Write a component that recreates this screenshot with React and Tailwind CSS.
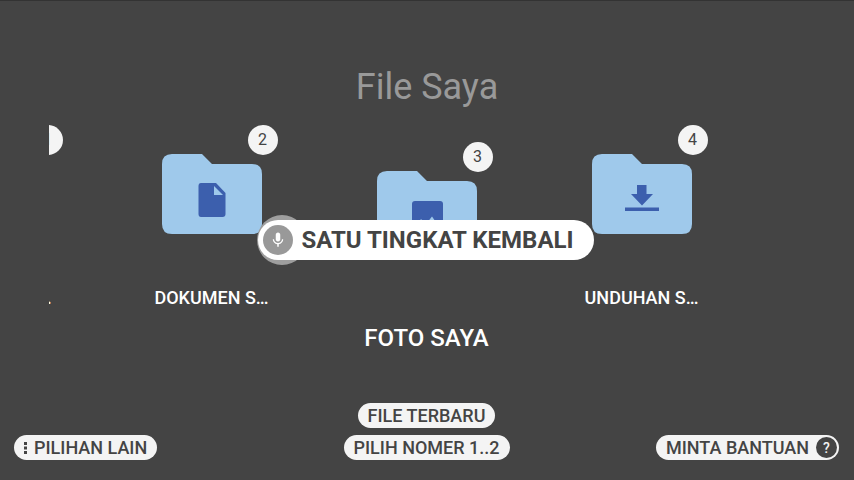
const FOLDER = "M10 0H40L50 10H90Q100 10 100 20V70Q100 80 90 80H10Q0 80 0 70V10Q0 0 10 0Z";

function Folder({ children }) {
  return (
    <svg viewBox="0 0 100 80" className="h-20 w-[100px]" aria-hidden="true">
      <path d={FOLDER} fill="#9fc9eb" />
      <g fill="#3c5fad">{children}</g>
    </svg>
  );
}

const items = [
  { n: 1, label: "PESANAN S…", icon: null },
  {
    n: 2,
    label: "DOKUMEN S…",
    icon: (
      <>
        <path d="M39 29H54L63.500 39V60Q63.500 63 60.500 63H39Q36.500 63 36.500 60V32Q36.500 29 39 29Z" />
        <path d="M52 32V41H61Z" fill="#9fc9eb" />
      </>
    ),
  },
  {
    n: 3,
    label: "FOTO SAYA",
    active: true,
    icon: (
      <>
        <rect x="35" y="30" width="31" height="31" rx="3" />
        <path d="M38 57L44 48L49 53L55 45.500L63 57Z" fill="#9fc9eb" />
      </>
    ),
  },
  {
    n: 4,
    label: "UNDUHAN S…",
    icon: (
      <>
        <path d="M45 31H54.500V40H61L50 51.500L39 40H45Z" />
        <rect x="33" y="53.500" width="34" height="3.500" />
      </>
    ),
  },
];

function Item({ n, label, active, icon }) {
  return (
    <li className="w-[215px] shrink-0">
      <button
        type="button"
        className={`flex w-full flex-col items-center ${active ? "pt-[46px]" : "pt-[29px]"}`}
      >
        <span className="relative block">
          <Folder>{icon}</Folder>
          <span className="absolute -top-[29px] -right-4 flex size-[30px] items-center justify-center rounded-full bg-[#f4f4f4] text-base text-[#444]">
            {n}
          </span>
        </span>
        <span
          className={`block font-medium whitespace-nowrap text-white ${
            active ? "mt-[73px] text-2xl leading-7" : "mt-[52px] text-lg leading-6"
          }`}
        >
          {label}
        </span>
      </button>
    </li>
  );
}

function Pill({ children, className = "" }) {
  return (
    <button
      type="button"
      className={`flex h-[25px] items-center rounded-full bg-[#f4f4f4] text-lg font-medium whitespace-nowrap text-[#444] ${className}`}
    >
      {children}
    </button>
  );
}

export default function App() {
  return (
    <main className="relative flex min-h-screen flex-col overflow-hidden border-t border-[#333] bg-[#444] font-['Roboto',sans-serif]">
      <h1 className="mt-16 text-center text-4xl leading-[44px] text-[#999]">File Saya</h1>

      <ul className="mr-[50px] ml-[49px] mt-4 flex justify-center overflow-hidden">
        {items.map((item) => (
          <Item key={item.n} {...item} />
        ))}
        <li className="w-[215px] shrink-0" aria-hidden="true" />
      </ul>

      <footer className="mt-auto grid grid-cols-[1fr_auto_1fr] items-end pr-[15px] pb-5 pl-[14px]">
        <Pill className="justify-self-start pr-[10px] pl-2">
          <svg viewBox="0 0 7 14" className="mr-[5px] h-[14px] w-[7px]" fill="#444" aria-hidden="true">
            <rect x="2" y="1" width="3" height="3" />
            <rect x="2" y="5.500" width="3" height="3" />
            <rect x="2" y="10" width="3" height="3" />
          </svg>
          PILIHAN LAIN
        </Pill>
        <div className="flex flex-col items-center gap-[7px]">
          <Pill className="px-[10px]">FILE TERBARU</Pill>
          <Pill className="px-[10px]">PILIH NOMER 1..2</Pill>
        </div>
        <Pill className="justify-self-end pr-[2px] pl-[10px]">
          MINTA BANTUAN
          <span className="ml-[7px] flex size-[21px] items-center justify-center rounded-full bg-[#444] text-sm text-[#f4f4f4]">
            ?
          </span>
        </Pill>
      </footer>

      <div className="absolute inset-x-0 top-[214px] flex justify-center pr-[2px]" role="status">
        <div className="relative flex h-[50px] items-center">
          <span className="absolute -left-px size-[50px] rounded-full bg-[#9e9e9e]" />
          <div className="relative flex h-10 items-center rounded-full bg-white pr-5 pl-[5px] text-2xl font-bold whitespace-nowrap text-[#444]">
            <span className="mr-2 flex size-[30px] items-center justify-center rounded-full bg-[#999]">
              <svg viewBox="0 0 24 24" className="size-[18px]" fill="#fff" aria-hidden="true">
                <path d="M12 14c1.660 0 3-1.340 3-3V5c0-1.660-1.340-3-3-3S9 3.340 9 5v6c0 1.660 1.340 3 3 3zm5.300-3c0 3-2.540 5.100-5.300 5.100S6.700 14 6.700 11H5c0 3.410 2.720 6.230 6 6.720V21h2v-3.280c3.280-.480 6-3.300 6-6.720h-1.700z" />
              </svg>
            </span>
            SATU TINGKAT KEMBALI
          </div>
        </div>
      </div>
    </main>
  );
}
